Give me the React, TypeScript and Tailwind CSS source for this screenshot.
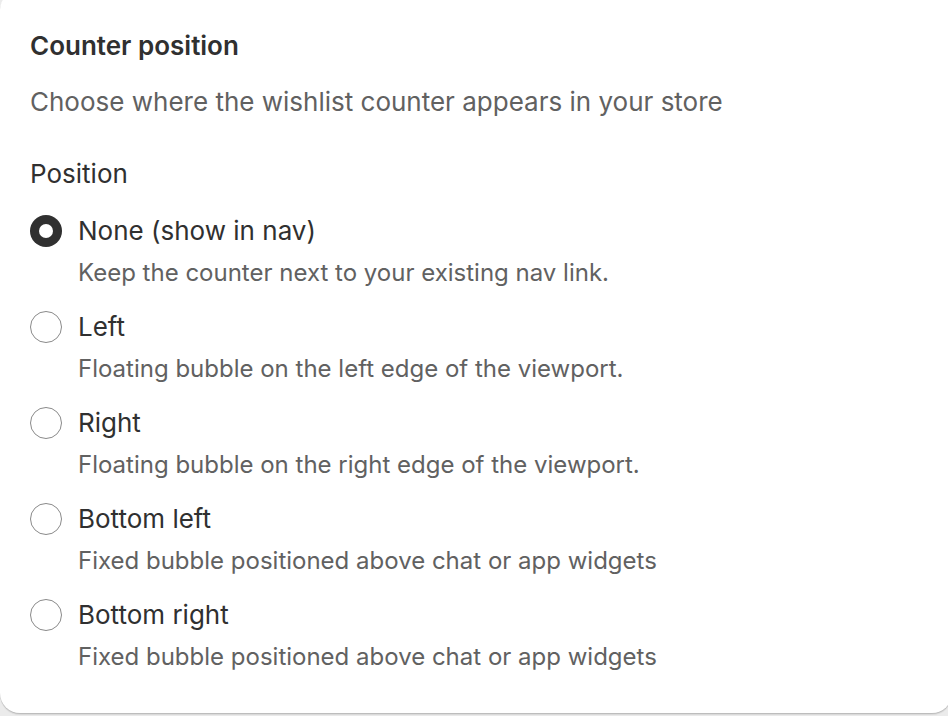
import React, { useState } from "react";

const options = [
  { id: "none", label: "None (show in nav)", help: "Keep the counter next to your existing nav link." },
  { id: "left", label: "Left", help: "Floating bubble on the left edge of the viewport." },
  { id: "right", label: "Right", help: "Floating bubble on the right edge of the viewport." },
  { id: "bottom-left", label: "Bottom left", help: "Fixed bubble positioned above chat or app widgets" },
  { id: "bottom-right", label: "Bottom right", help: "Fixed bubble positioned above chat or app widgets" },
];

const Radio = ({ checked }: { checked: boolean }) => {
  return checked ? (
    <span className="w-[32px] h-[32px] rounded-full bg-[#303030] flex items-center justify-center shrink-0">
      <span className="w-[14px] h-[14px] rounded-full bg-white" />
    </span>
  ) : (
    <span className="w-[32px] h-[32px] rounded-full border border-[#8a8a8a] bg-white shrink-0" />
  );
};

export default function App() {
  const [selected, setSelected] = useState("none");

  return (
    <div
      className="h-screen overflow-hidden bg-[#ebebeb]"
      style={{ fontFamily: "Inter, 'Noto Sans', sans-serif" }}
    >
      <div className="-mt-[10px] -mr-[4px] bg-white rounded-[20px] shadow-[0_1px_0_0_rgba(0,0,0,0.12),0_2px_1px_0_rgba(0,0,0,0.08)] pt-[40px] pb-[41px] pl-[30px] pr-[32px]">
        <h2 className="text-[26px] leading-[32px] font-semibold text-[#303030]">Counter position</h2>
        <p className="mt-[24px] text-[26px] leading-[32px] text-[#616161]">
          Choose where the wishlist counter appears in your store
        </p>
        <div className="mt-[40px] text-[26px] leading-[32px] text-[#303030]">Position</div>
        <div className="mt-[25px] flex flex-col gap-[23px]">
          {options.map((o) => (
            <label key={o.id} className="flex flex-col cursor-pointer" onClick={() => setSelected(o.id)}>
              <div className="flex items-center gap-[16px]">
                <Radio checked={selected === o.id} />
                <span className="text-[26px] leading-[32px] text-[#303030]">{o.label}</span>
              </div>
              <span className="mt-[11px] pl-[48px] text-[24px] leading-[30px] text-[#616161]">{o.help}</span>
            </label>
          ))}
        </div>
      </div>
    </div>
  );
}
